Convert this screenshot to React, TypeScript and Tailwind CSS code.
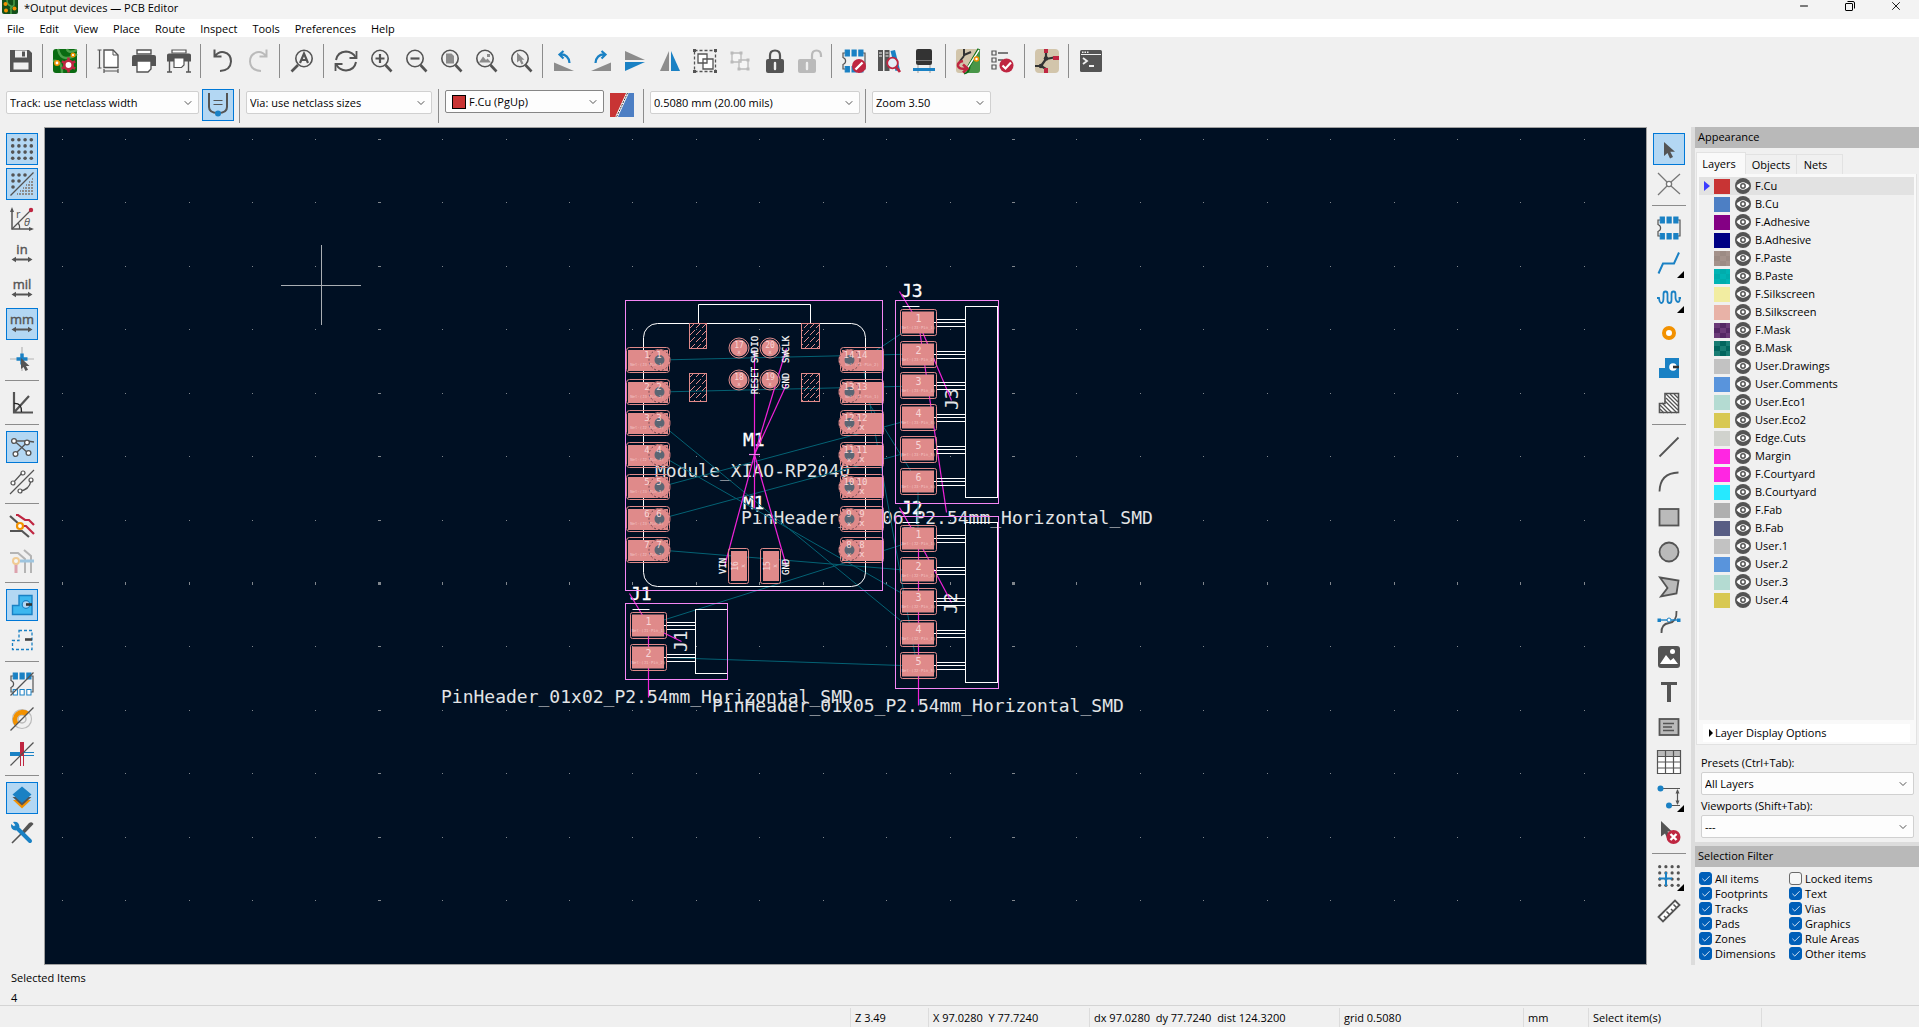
import { useState } from "react";
import type { ReactNode } from "react";
import clsx from "clsx";
import { ChevronDown, Check, Minus, X } from "lucide-react";

const G = "#545454";
const B = "#1a81c4";
const R = "#bf2641";
const O = "#f29100";

/* 24x24 drawings */
const magnifier = (
  <g fill="none" stroke={G}>
    <circle cx="11" cy="9.5" r="8.2" strokeWidth="1.6" />
    <path d="M16.5 16 22.5 22.5" strokeWidth="2.6" />
  </g>
);

const dots = (n: number, step: number, start: number, r: number) =>
  Array.from({ length: n * n }, (_, i) => (
    <circle
      key={i}
      cx={start + (i % n) * step}
      cy={start + Math.floor(i / n) * step}
      r={r}
      fill={G}
    />
  ));

const unitIcon = (label: string) => (
  <>
    <text
      x="12"
      y="12"
      fontSize="13"
      textAnchor="middle"
      fill={G}
      stroke={G}
      strokeWidth="0.4"
      className="font-['Open_Sans',sans-serif]"
    >
      {label}
    </text>
    <path d="M4 17.5H20" stroke={G} strokeWidth="2" />
    <path d="M1.5 17.5 6 14.8V20.2ZM22.5 17.5 18 14.8V20.2Z" fill={G} />
  </>
);

const footprint = (filled: boolean) => (
  <>
    <path
      d="M3 4H1V8.5Q3.6 9.5 3.6 12T1 15.5V20H3M21 4H23V20H21"
      fill="none"
      stroke={G}
      strokeWidth="1.2"
    />
    {[3.2, 10, 16.8].map((x) => (
      <g key={x} fill={B} stroke={B}>
        <rect x={x} y="1" width="4.2" height="6" />
        <rect x={x} y="17.5" width="4.2" height="5.5" fill={filled ? B : "#fff"} />
      </g>
    ))}
  </>
);

const icons: Record<string, ReactNode> = {
  save: (
    <>
      <path d="M1 1H20L23 4V23H1Z" fill={G} />
      <path d="M6 1.5H18V8.5H6ZM4.5 13.5H19.5V20.5H4.5Z" fill="#f0f0f0" />
      <path d="M13 2.5H16V7.5H13Z" fill={G} />
    </>
  ),
  boardSetup: (
    <>
      <rect x="0" y="0" width="24" height="24" rx="3" fill="#0a6b12" />
      <path d="M5 0Q7 9 13 9T24 5M14 0Q15 5 24 1M0 12Q9 10 9 24" stroke="#4ba04a" strokeWidth="2.4" fill="none" />
      <circle cx="4" cy="14" r="2.2" fill="#fff" stroke={O} strokeWidth="1.6" />
      <circle cx="20" cy="6" r="1.8" fill="#fff" stroke={O} strokeWidth="1.4" />
      <g stroke={R} strokeWidth="2.6">
        <path d="M15.5 8.5V23.5M8.8 12.3 22.2 19.7M8.8 19.7 22.2 12.3" />
        <circle cx="15.5" cy="16" r="4.2" fill="#fff" />
      </g>
    </>
  ),
  page: (
    <>
      <path d="M7 1H16L21 6V18.5H7Z" fill="#fff" stroke={G} strokeWidth="1.4" />
      <path d="M16 1V6H21" fill="none" stroke={G} />
      <path d="M2.5 1V19M0.5 1H4.5M0.5 19H4.5M7 22H21M7 20V24M21 20V24" stroke={G} strokeWidth="1.2" />
    </>
  ),
  print: (
    <>
      <path d="M5 1H19V5H5Z" fill="#fff" stroke={G} strokeWidth="1.4" />
      <path d="M2 6H22Q24 6 24 8V17H0V8Q0 6 2 6Z" fill={G} />
      <path d="M5 12H19V20L16 23H5Z" fill="#fff" stroke={G} strokeWidth="1.4" />
    </>
  ),
  plot: (
    <>
      <path d="M5 1H19V4H5Z" fill="#fff" stroke={G} strokeWidth="1.2" />
      <path d="M2 4.5H22Q24 4.5 24 6V12.5H0V6Q0 4.5 2 4.5Z" fill={G} />
      <path d="M7 9H17V16L14.5 18.5H7Z" fill="#fff" stroke={G} strokeWidth="1.2" />
      <path d="M2.5 12V23M21.5 12V23M0 23H5M19 23H24" stroke={G} strokeWidth="1.4" />
    </>
  ),
  undo: (
    <path d="M3.5 0.5V7.5H10.5M3.5 7.5Q8 2 13 3.3Q20 5 20 12.5Q19.5 21.5 9 22" fill="none" stroke={G} strokeWidth="2" />
  ),
  redo: (
    <path d="M20.5 0.5V7.5H13.5M20.5 7.5Q16 2 11 3.3Q4 5 4 12.5Q4.5 21.5 15 22" fill="none" stroke="#bababa" strokeWidth="2" />
  ),
  find: (
    <>
      <circle cx="14" cy="9.5" r="8.2" fill="none" stroke={G} strokeWidth="1.6" />
      <path d="M8 16 1.5 22.5" stroke={G} strokeWidth="2.6" />
      <path d="M10 14 14 4.5 18 14M11.5 11H16.5" fill="none" stroke={G} strokeWidth="2.2" />
    </>
  ),
  refresh: (
    <>
      <path d="M2 11Q3.5 3 12 2.5Q18.5 3 21.5 8M22 13Q20.5 21 12 21.5Q5.5 21 2.5 16" fill="none" stroke={G} strokeWidth="2" />
      <path d="M22.5 2V9H15.5M1.5 22V15H8.5" fill="none" stroke={G} strokeWidth="1.8" />
    </>
  ),
  zoomIn: <>{magnifier}<path d="M11 5V14M6.5 9.5H15.5" stroke={G} strokeWidth="2.2" /></>,
  zoomOut: <>{magnifier}<path d="M6.5 9.5H15.5" stroke={G} strokeWidth="2.2" /></>,
  zoomPage: <>{magnifier}<path d="M7 4.5H12.5L15 7V14.5H7Z" fill="#8c8c8c" /></>,
  zoomObjects: <>{magnifier}<path d="M5 13.5 9 7.5 12 11 13.5 9.5 17 13.5ZM13 5H16V8H13Z" fill="#8c8c8c" /></>,
  zoomSelection: <>{magnifier}<path d="M8 3.5V13.5L10.5 11.5 12.5 15.5 14.5 14.5 12.7 10.8H15.5Z" fill="#8c8c8c" /></>,
  rotateLeft: (
    <>
      <path d="M1 13.5V22H21Z" fill="#8c8c8c" />
      <path d="M10.5 2 6.5 5.5 10.5 9.5M7 5.5Q15.5 5 16.5 14" fill="none" stroke={B} strokeWidth="2.2" />
    </>
  ),
  rotateRight: (
    <>
      <path d="M23 13.5V22H3Z" fill="#8c8c8c" />
      <path d="M13.5 2 17.5 5.5 13.5 9.5M17 5.5Q8.5 5 7.5 14" fill="none" stroke={B} strokeWidth="2.2" />
    </>
  ),
  flipV: <><path d="M2 2V11H22Z" fill="#8c8c8c" /><path d="M2 13V22L22 13Z" fill={B} /></>,
  mirror: <><path d="M11 2V22H2Z" fill="#8c8c8c" /><path d="M13 2V22H22Z" fill={B} /></>,
  group: (
    <>
      <rect x="1.5" y="1.5" width="21" height="21" fill="none" stroke={G} strokeDasharray="3 2" strokeWidth="1.3" />
      <path d="M0 0H3V3H0ZM21 0H24V3H21ZM0 21H3V24H0ZM21 21H24V24H21Z" fill={G} />
      <path d="M5 5H14V14H5ZM10 10H20V20H10Z" fill="#fff" stroke={G} strokeWidth="1.3" />
    </>
  ),
  ungroup: (
    <>
      <path d="M4 4H13V13H4ZM11 11H20V20H11Z" fill="#f5f5f5" stroke="#bababa" strokeWidth="1.3" />
      <path d="M2.5 2.5H5.5V5.5H2.5ZM11.5 2.5H14.5V5.5H11.5ZM2.5 11.5H5.5V14.5H2.5ZM18.5 9.5H21.5V12.5H18.5ZM9.5 18.5H12.5V21.5H9.5ZM18.5 18.5H21.5V21.5H18.5Z" fill="#bababa" />
    </>
  ),
  lock: (
    <>
      <path d="M7 11V6.5Q7 1.5 12 1.5T17 6.5V11" fill="none" stroke={G} strokeWidth="2.2" />
      <rect x="3" y="10" width="18" height="14" rx="2" fill={G} />
      <path d="M12 14V20" stroke="#f0f0f0" strokeWidth="2.4" strokeLinecap="round" />
    </>
  ),
  unlock: (
    <>
      <path d="M14 11V6.5Q14 1.5 18.5 1.5T23 6.5V8" fill="none" stroke="#bababa" strokeWidth="2.2" />
      <rect x="0" y="10" width="18" height="14" rx="2" fill="#bababa" />
      <path d="M9 14V20" stroke="#f0f0f0" strokeWidth="2.4" strokeLinecap="round" />
    </>
  ),
  footprintEditor: (
    <>
      {footprint(true)}
      <circle cx="17" cy="17" r="7" fill={R} />
      <path d="M13.5 20.5 20.5 13.5" stroke="#fff" strokeWidth="2.4" />
    </>
  ),
  library: (
    <>
      <path d="M1 1H6V22H1ZM7.5 1H12.5V22H7.5Z" fill={G} />
      <path d="M2 4H5M2 7H5M8.5 4H11.5M8.5 7H11.5" stroke="#f0f0f0" />
      <path d="M13.5 2 18 1 23 21 18.5 22Z" fill={B} />
      <circle cx="15.5" cy="14" r="5.3" fill="#e4eff7" stroke={R} strokeWidth="1.8" />
      <path d="M19 18 23 23" stroke={R} strokeWidth="2.8" />
    </>
  ),
  viewer3d: (
    <>
      <rect x="4" y="0" width="16" height="16" rx="2" fill="#333" />
      <path d="M4 11.5H20" stroke="#777" />
      <path d="M6 16V24M18 16V24" stroke="#aaa" strokeWidth="1.2" />
      <path d="M1 20.5H23" stroke={B} strokeWidth="3" />
    </>
  ),
  updatePcb: (
    <>
      <rect width="24" height="24" rx="3" fill="#d2c5ab" />
      <path d="M22 0Q24 0 24 3V21Q24 24 21 24H8Z" fill="#489648" />
      <path d="M8 24Q13 23 13 17L23 0" fill="none" stroke="#0a6b12" strokeWidth="3" />
      <path d="M8 0V7M8 6 15 3M8 7 4 12" stroke="#333" strokeWidth="2" />
      <path d="M23 1 9 23" stroke="#fff" strokeWidth="1.4" />
      <circle cx="20.5" cy="10" r="2" fill="#fff" stroke={O} strokeWidth="1.6" />
      <path d="M7 12Q1.5 13 2 17Q3 20.5 10 19.5M7 15.5 11.5 19.5 7 23.5" fill="none" stroke={R} strokeWidth="2.6" />
    </>
  ),
  drc: (
    <>
      <path d="M1 2H5V6H1ZM1 9H5V13H1ZM1 16H5V20H1Z" fill="none" stroke={G} strokeWidth="1.2" />
      <path d="M7 4H17M7 11H12" stroke={G} strokeWidth="1.4" />
      <circle cx="15.5" cy="16.5" r="7" fill={R} />
      <path d="M11.5 16.5 14.5 19.5 20 13.5" fill="none" stroke="#fff" strokeWidth="2.2" />
    </>
  ),
  schematic: (
    <>
      <rect width="24" height="24" rx="4" fill="#d2c5ab" />
      <path d="M11 3V10M11 10 19 8.5M11 10 6 17M6 17H0M6 17 11 20" fill="none" stroke="#333" strokeWidth="2.2" />
      <path d="M9 0H13V4H9ZM18 7H24V11H18ZM9 19H13V24H9Z" fill={R} />
      <circle cx="11" cy="9.5" r="2.3" fill="#333" /><circle cx="6" cy="17" r="2.3" fill="#333" />
    </>
  ),
  terminal: (
    <>
      <rect x="1" y="1" width="22" height="22" rx="1.5" fill={G} />
      <path d="M2 5.5H22" stroke="#f0f0f0" />
      <path d="M3 3.2H10" stroke="#f0f0f0" strokeWidth="1.5" strokeDasharray="1.5 1" />
      <path d="M4 9 8 12 4 15M10 17H15" fill="none" stroke="#f0f0f0" strokeWidth="1.8" />
    </>
  ),
  grid: dots(4, 6.2, 2.7, 1.8),
  gridOverrides: (
    <>
      {[[3, 3], [9, 3], [15, 3], [3, 9], [9, 9], [3, 15]].map(([x, y]) => (
        <circle key={`${x}-${y}`} cx={x} cy={y} r="1.8" fill={G} />
      ))}
      {[22, 19, 16, 13, 10, 7].map((y, i) => (
        <path key={y} d={`M23 ${y}H${7 + i * 3}`} stroke="#8c8c8c" strokeWidth="2" strokeDasharray="2 1" />
      ))}
      <path d="M0.5 23.5 23.5 0.5" stroke={G} strokeWidth="1.2" />
    </>
  ),
  polar: (
    <>
      <path d="M2 2V22H22" fill="none" stroke={G} strokeWidth="1.5" />
      <path d="M0 5 2 0 4 5ZM19 20 24 22 19 24Z" fill={G} />
      <path d="M2 22 20 4M8 16Q10 18 9.5 22" fill="none" stroke={G} strokeWidth="1.2" />
      <circle cx="21" cy="3" r="2.2" fill={R} />
      <text x="6" y="11" fontSize="11" fill={G}>r</text>
      <text x="14" y="19" fontSize="11" fontStyle="italic" fill={G}>θ</text>
    </>
  ),
  inch: unitIcon("in"),
  mil: unitIcon("mil"),
  mm: unitIcon("mm"),
  cursorShape: (
    <>
      <path d="M12 0V24M0 12H24" stroke="#b4b4b4" strokeWidth="1.2" />
      <path d="M12 6.5V17.5M6.5 12H17.5" stroke={B} strokeWidth="3.5" />
      <path d="M11 11V22L13.5 20 15.5 24 18 22.8 16 19H19.5Z" fill={G} />
    </>
  ),
  angle: (
    <>
      <path d="M4 1V21.5H23M4 21.5 19 5" fill="none" stroke={G} strokeWidth="2.2" />
      <path d="M4 12.5Q12 12 11.5 21" fill="none" stroke="#222" strokeWidth="1.3" />
    </>
  ),
  ratsnest: (
    <g fill="#fff" stroke={G} strokeWidth="1.3">
      <path d="M4 6H17L24 7M17 7.5 5 19M5 6.5 18 18" />
      <circle cx="4" cy="6" r="2.4" /><circle cx="17" cy="7.5" r="2.4" />
      <circle cx="5.5" cy="19" r="2.4" /><circle cx="18.5" cy="18" r="2.4" />
    </g>
  ),
  ratsnestCurved: (
    <g fill="none" stroke={G} strokeWidth="1.2">
      <path d="M0 24 24 0M3 13 12 3M10 21Q19 20 21 11" />
      <g fill="#fff"><circle cx="3" cy="13" r="2" /><circle cx="13" cy="3" r="2" /><circle cx="10" cy="21" r="2" /><circle cx="21" cy="10" r="2" /></g>
    </g>
  ),
  highlightNet: (
    <g fill="none" strokeWidth="2.2">
      <path d="M6 1H8L15 6H19L24 11M10 12H16L24 20" stroke={R} />
      <path d="M0 2 10 11M0 17H12L19 23" stroke={G} />
      <circle cx="10" cy="12" r="3" fill="#fff" stroke={O} />
    </g>
  ),
  netInspector: (
    <g fill="none" strokeWidth="2" opacity="0.38">
      <path d="M0 4H8L15 10V24M14 1 21 7V24" stroke={G} />
      <path d="M10 12H24" stroke={B} strokeWidth="3" />
      <path d="M6 14V24" stroke={R} strokeWidth="3" />
      <circle cx="6" cy="12" r="3" fill="#fff" stroke={O} />
    </g>
  ),
  zoneFill: (
    <>
      <path d="M9 2.5H22V21.5H2.5V12.5H9Z" fill="#3db7ef" stroke={B} strokeWidth="1.4" />
      <circle cx="16" cy="11.5" r="3.8" fill="#b4d7f2" stroke={B} strokeWidth="1.2" />
      <path d="M16 11.5H22" stroke="#333" strokeWidth="2.6" />
    </>
  ),
  zoneOutline: (
    <>
      <path d="M9 2.5H22V21.5H2.5V12.5H9Z" fill="none" stroke={B} strokeWidth="1.3" strokeDasharray="3 2" />
      <path d="M15 11.5H22" stroke="#444" strokeWidth="2.6" />
    </>
  ),
  padSketch: <>{footprint(false)}<path d="M0.5 23.5 23.5 0.5" stroke={G} strokeWidth="1.2" /></>,
  viaSketch: (
    <>
      <circle cx="12" cy="12" r="9.5" fill="none" stroke="#bababa" strokeWidth="1.2" />
      <circle cx="12" cy="12" r="4" fill="none" stroke="#bababa" strokeWidth="1.5" />
      <path d="M4.5 18.5A10 10 0 0 1 19 5L15 9A4.5 4.5 0 0 0 8.5 15.5Z" fill={O} />
      <path d="M0.5 23.5 23.5 0.5" stroke={G} strokeWidth="1.2" />
    </>
  ),
  trackSketch: (
    <>
      <path d="M0 12H12" stroke={B} strokeWidth="4" /><path d="M12 10.5H24M12 13.5H24" stroke={B} />
      <path d="M12 0V14" stroke={R} strokeWidth="4" /><path d="M10.5 13V24M13.5 13V24" stroke={R} />
      <path d="M0.5 23.5 23.5 0.5" stroke={G} strokeWidth="1.2" />
    </>
  ),
  layers: (
    <>
      <path d="M3 14 12 22.5 21 14Z" fill={O} /><path d="M2.5 11 12 19.5 21.5 11Z" fill={G} />
      <path d="M12 0.5 21.5 8.5 12 17 2.5 8.5Z" fill={B} />
    </>
  ),
  tools: (
    <>
      <path d="M2 22 13 11" stroke={G} strokeWidth="1.6" />
      <path d="M12 10 19 2Q22 0 23.5 3L14 13Z" fill={G} />
      <path d="M6 6 20 20" stroke={B} strokeWidth="4" strokeLinecap="round" />
      <path d="M3 1Q9 0 9.5 6L6 9.5Q0.5 9 1 3L5 6 6 5Z" fill={B} />
    </>
  ),
  select: <path d="M7 5V19L10.5 16 13 21.5 16 20 13.3 14.8H18Z" fill={G} />,
  localRatsnest: (
    <g fill="none" stroke="#777" strokeWidth="1.3">
      <path d="M1 1 10 10M23 2 14 10M1 23 10 14M23 22 14 14" />
      <circle cx="12" cy="12" r="2.6" fill="#fff" />
    </g>
  ),
  addFootprint: footprint(true),
  route: <path d="M1.5 22.5 6 12.5H17L22 1.5" fill="none" stroke={B} strokeWidth="2" />,
  tune: <path d="M0 12H2Q2.500 17 4.500 17T6.500 11V8Q6.500 5.500 8.500 5.500T10.500 8V14Q10.500 17 12.500 17T14.500 14V8Q14.500 5.500 16.500 5.500T18.500 8V12Q19 16 21 16T22.500 12H24" fill="none" stroke={B} strokeWidth="1.8" />,
  via: <circle cx="12" cy="12" r="5" fill="#fff" stroke={O} strokeWidth="4" />,
  zone: (
    <>
      <path d="M8 2H22V22H2V12H8Z" fill={B} />
      <circle cx="16" cy="11" r="3.8" fill="#fff" />
      <path d="M16 11H22" stroke="#333" strokeWidth="2.6" />
    </>
  ),
  ruleArea: (
    <>
      <path d="M8 2.5H21.5V21.5H2.5V12.5H8Z" fill="#fff" stroke={G} strokeWidth="1.6" />
      <path d="M9 3 21 15M13 3 21 11M17 3 21 7M9 7 21 19M8 10 20 22M5 12 15 22M3 14 11 22M3 18 7 22" stroke={G} strokeWidth="1.3" />
    </>
  ),
  line: <path d="M2.5 21.5 21.5 2.5" stroke={G} strokeWidth="1.8" />,
  arc: <path d="M2.5 21.5Q3 3 21.5 2.5" fill="none" stroke={G} strokeWidth="1.8" />,
  rect: <rect x="2.5" y="4" width="19" height="16.5" fill="#bababa" stroke={G} strokeWidth="1.8" />,
  circle: <circle cx="12" cy="12" r="9.5" fill="#bababa" stroke={G} strokeWidth="1.8" />,
  polygon: <path d="M3 2.5 21.5 5.5 19.5 18.5 4 21.5 10.5 13Z" fill="#bababa" stroke={G} strokeWidth="1.8" />,
  bezier: (
    <>
      <path d="M4.5 23Q4 14 12 13T19.5 1" fill="none" stroke={G} strokeWidth="1.8" />
      <path d="M2 10H22" stroke={B} strokeWidth="1.4" />
      <path d="M0.5 8.5H4V12H0.5ZM20 8.5H23.5V12H20Z" fill={B} />
      <circle cx="12" cy="10" r="2" fill="#fff" stroke={B} />
    </>
  ),
  image: (
    <>
      <rect x="1" y="1" width="22" height="22" rx="3" fill={G} />
      <path d="M3 19 9 10 13.5 15.5 16.5 13 21 19Z" fill="#fff" /><circle cx="15.5" cy="6.5" r="2.5" fill="#fff" />
    </>
  ),
  text: <path d="M4 2H20V5H14V22H10V5H4Z" fill={G} />,
  textBox: (
    <>
      <rect x="2.5" y="4" width="19" height="16" fill="#bababa" stroke={G} strokeWidth="1.8" />
      <path d="M6 8.5H17M6 12H15M6 15.5H17" stroke={G} strokeWidth="1.3" />
    </>
  ),
  table: (
    <>
      <rect x="0.5" y="0.5" width="23" height="23" fill="#fff" /><rect x="0.5" y="0.5" width="23" height="6" fill="#bababa" />
      <path d="M0.5 0.5H23.5V23.5H0.5ZM0.5 6.5H23.5M0.5 12H23.5M0.5 18H23.5M8.5 1V23M16.5 1V23" fill="none" stroke={G} strokeWidth="1.2" />
    </>
  ),
  dimension: (
    <>
      <path d="M4 3.5H23M12 20.5H23M20.5 5V19" stroke={G} strokeWidth="1.2" />
      <path d="M18.5 8.5 20.5 4 22.5 8.5ZM18.5 15.5 20.5 20 22.5 15.5Z" fill={G} />
      <circle cx="3.5" cy="3.5" r="3" fill={B} /><circle cx="12" cy="20.5" r="3" fill={B} />
    </>
  ),
  remove: (
    <>
      <path d="M4 1V16.5L8 13.5 10 18 13 17 10.5 11.5H15Z" fill={G} />
      <circle cx="16.5" cy="17" r="7" fill={R} />
      <path d="M13.5 14 19.5 20M19.5 14 13.5 20" stroke="#fff" strokeWidth="2.4" />
    </>
  ),
  gridOrigin: <>{dots(4, 6.2, 2.7, 1.6)}<path d="M9 8V22M2 14.5H15" stroke={B} strokeWidth="2" /></>,
  measure: (
    <>
      <path d="M1.5 18 18 1.5 22.5 6 6 22.5Z" fill="#fff" stroke={G} strokeWidth="1.8" />
      <path d="M9 19 7 17M12.5 15.5 9.5 12.5M16 12 14 10M19.5 8.5 16.5 5.5" stroke={G} strokeWidth="1.5" />
    </>
  ),
  trackWidth: (
    <>
      <path d="M3 0V14Q3 20 12 20T21 14V0" fill="none" stroke={G} strokeWidth="2" />
      <path d="M7.5 7.5H16.5M7.5 11.5H16.5" stroke={G} strokeWidth="1.2" />
      <circle cx="12" cy="20.5" r="3" fill={B} />
    </>
  ),
};

type Tool = { icon: string; label: string; active?: boolean; disabled?: boolean; more?: boolean };
type Item = Tool | "|";

const t = (icon: string, label: string, extra: Partial<Tool> = {}): Tool => ({ icon, label, ...extra });

const topTools: Item[] = [
  t("save", "Save"), "|", t("boardSetup", "Board Setup"), "|",
  t("page", "Page Settings"), t("print", "Print"), t("plot", "Plot"), "|",
  t("undo", "Undo"), t("redo", "Redo", { disabled: true }), "|", t("find", "Find"), "|",
  t("refresh", "Refresh"), t("zoomIn", "Zoom In"), t("zoomOut", "Zoom Out"),
  t("zoomPage", "Zoom to Fit"), t("zoomObjects", "Zoom to Objects"), t("zoomSelection", "Zoom to Selection"), "|",
  t("rotateLeft", "Rotate Counterclockwise"), t("rotateRight", "Rotate Clockwise"),
  t("flipV", "Mirror Vertically"), t("mirror", "Mirror Horizontally"), t("group", "Group"),
  t("ungroup", "Ungroup", { disabled: true }), t("lock", "Lock"), t("unlock", "Unlock", { disabled: true }), "|",
  t("footprintEditor", "Footprint Editor"), t("library", "Footprint Library Browser"), t("viewer3d", "3D Viewer"), "|",
  t("updatePcb", "Update PCB from Schematic"), t("drc", "Design Rules Checker"), "|",
  t("schematic", "Schematic Editor"), "|", t("terminal", "Scripting Console"),
];

const leftTools: Item[] = [
  t("grid", "Show Grid", { active: true }), t("gridOverrides", "Grid Overrides", { active: true }),
  t("polar", "Polar Coordinates"), t("inch", "Inches"), t("mil", "Mils"), t("mm", "Millimeters", { active: true }),
  t("cursorShape", "Full-Window Crosshairs"), "|", t("angle", "Constrain to 45 Degrees"), "|",
  t("ratsnest", "Show Ratsnest", { active: true }), t("ratsnestCurved", "Curved Ratsnest Lines"), "|",
  t("highlightNet", "Net Highlighting"), t("netInspector", "Dim Inactive Nets"), "|",
  t("zoneFill", "Draw Zone Fills", { active: true }), t("zoneOutline", "Draw Zone Outlines"), "|",
  t("padSketch", "Sketch Pads"), t("viaSketch", "Sketch Vias"), t("trackSketch", "Sketch Tracks"), "|",
  t("layers", "Appearance Manager", { active: true }), t("tools", "Properties Manager"),
];

const rightTools: Item[] = [
  t("select", "Select", { active: true }), t("localRatsnest", "Local Ratsnest"), "|",
  t("addFootprint", "Add Footprint"), t("route", "Route Tracks", { more: true }), t("tune", "Tune Length", { more: true }),
  t("via", "Add Vias"), t("zone", "Add Filled Zone"), t("ruleArea", "Add Rule Area"), "|",
  t("line", "Draw Line"), t("arc", "Draw Arc"), t("rect", "Draw Rectangle"), t("circle", "Draw Circle"),
  t("polygon", "Draw Polygon"), t("bezier", "Draw Bezier Curve"), t("image", "Add Image"), t("text", "Add Text"),
  t("textBox", "Add Text Box"), t("table", "Add Table"), t("dimension", "Add Dimension", { more: true }),
  t("remove", "Delete Items"), "|", t("gridOrigin", "Set Grid Origin", { more: true }), t("measure", "Measure"),
];

const layers: [string, string, string?][] = [
  ["F.Cu", "bg-[#c83434]"],
  ["B.Cu", "bg-[#4d7fc4]"],
  ["F.Adhesive", "bg-[#840084]"],
  ["B.Adhesive", "bg-[#000084]"],
  ["F.Paste", "bg-[#a4928b]", "#9c8b84"],
  ["B.Paste", "bg-[#00b4b4]", "#00acac"],
  ["F.Silkscreen", "bg-[#f2eda1]"],
  ["B.Silkscreen", "bg-[#e8b2a7]"],
  ["F.Mask", "bg-[#6b3a78]", "#552765"],
  ["B.Mask", "bg-[#187c73]", "#02655e"],
  ["User.Drawings", "bg-[#c2c2c2]"],
  ["User.Comments", "bg-[#5994dc]"],
  ["User.Eco1", "bg-[#b4dbd2]"],
  ["User.Eco2", "bg-[#d8c852]"],
  ["Edge.Cuts", "bg-[#d0d2cd]"],
  ["Margin", "bg-[#ff26e2]"],
  ["F.Courtyard", "bg-[#ff26e2]"],
  ["B.Courtyard", "bg-[#26e9ff]"],
  ["F.Fab", "bg-[#afafaf]"],
  ["B.Fab", "bg-[#585d84]"],
  ["User.1", "bg-[#c2c2c2]"],
  ["User.2", "bg-[#5994dc]"],
  ["User.3", "bg-[#b4dbd2]"],
  ["User.4", "bg-[#d8c852]"],
];

const filters = [
  "All items", "Locked items", "Footprints", "Text", "Tracks", "Vias",
  "Pads", "Graphics", "Zones", "Rule Areas", "Dimensions", "Other items",
];

function ToolButton({ tool }: { tool: Tool }) {
  return (
    <button
      type="button"
      aria-label={tool.label}
      disabled={tool.disabled}
      className={clsx(
        "relative flex size-8 shrink-0 items-center justify-center border",
        tool.active ? "border-[#0078d7] bg-[#b3d7f3]" : "border-transparent"
      )}
    >
      <svg viewBox="0 0 24 24" className="size-6 overflow-visible">{icons[tool.icon]}</svg>
      {tool.more && (
        <svg viewBox="0 0 7 7" className="absolute right-0 bottom-0 size-[7px]">
          <path d="M7 0V7H0Z" />
        </svg>
      )}
    </button>
  );
}

function SideBar({ items }: { items: Item[] }) {
  return (
    <div className="flex w-11 shrink-0 flex-col items-center gap-[3px] pt-1.5">
      {items.map((it, i) =>
        it === "|" ? (
          <div key={i} className="mt-[2px] mb-[3px] h-px w-[34px] shrink-0 bg-[#8c8c8c]" />
        ) : (
          <ToolButton key={i} tool={it} />
        )
      )}
    </div>
  );
}

function Dropdown({ label, value, className }: { label: string; value: string; className?: string }) {
  return (
    <div className={clsx("relative flex h-[23px] rounded-[2px] border bg-[#fdfdfd]", className)}>
      {label === "Active layer" && (
        <span className="my-auto ml-1.5 size-3.5 shrink-0 border border-black bg-[#c83434]" />
      )}
      <select aria-label={label} className="min-w-0 flex-1 appearance-none bg-transparent pr-5 pl-[3px] outline-none">
        <option>{value}</option>
      </select>
      <ChevronDown className="pointer-events-none absolute top-[5px] right-1 size-3 text-[#555]" strokeWidth={2} />
    </div>
  );
}

function RowSep({ className }: { className: string }) {
  return <div className={clsx("h-[34px] w-px shrink-0 bg-[#8c8c8c]", className)} />;
}

/* board canvas */
const GRID = 63.42;
const PITCH = 31.72;
const COPPER = "#df8a8a";

type Pt = [number, number];

const ratsnest: [Pt, Pt][] = [
  [[660, 360], [917, 354]],
  [[660, 392], [917, 386]],
  [[660, 423], [917, 634]],
  [[660, 455], [917, 602]],
  [[660, 487], [917, 418]],
  [[660, 519], [917, 450]],
  [[660, 550], [917, 571]],
  [[862, 360], [917, 323]],
  [[862, 360], [917, 666]],
  [[862, 392], [917, 481]],
  [[648, 625], [917, 540]],
  [[648, 657], [917, 666]],
  [[918, 481], [918, 540]],
];

const anchors: [Pt, Pt][] = [
  [[754, 454], [754, 350]],
  [[754, 454], [786, 348]],
  [[754, 454], [786, 384]],
  [[754, 454], [754, 508]],
  [[754, 454], [724, 566]],
  [[754, 454], [786, 566]],
  [[918, 322], [899, 291]],
  [[918, 322], [951, 400]],
  [[918, 322], [946, 512]],
  [[918, 540], [899, 507]],
  [[918, 540], [951, 602]],
  [[918, 540], [918, 705]],
  [[648, 625], [629, 593]],
  [[648, 625], [681, 641]],
  [[648, 625], [648, 697]],
];

function GridDots() {
  const marks: ReactNode[] = [];
  for (let c = -15; c < 10; c++) {
    for (let r = -7; r < 6; r++) {
      const x = Math.round(1013 + c * GRID);
      const y = Math.round(583 + r * GRID);
      const w = c % 10 === 0 ? 3 : 1;
      const h = r % 10 === 0 ? 3 : 1;
      marks.push(<rect key={`${c}:${r}`} x={x - (w - 1) / 2} y={y - (h - 1) / 2} width={w} height={h} />);
    }
  }
  return <g fill="#80868c">{marks}</g>;
}

function PinHeader({ x, y, pins, name }: { x: number; y: number; pins: number; name: string }) {
  const length = Math.round(pins * PITCH);
  return (
    <g>
      <g fill="none" stroke="#fff">
        <rect x={x + 70} y={y + 6} width="32" height={length + 1} />
        <path d={`M${x + 7} ${y + 6}H${x + 24}`} />
      </g>
      {Array.from({ length: pins }, (_, i) => {
        const cy = Math.round(y + 22.5 + i * PITCH) - 0.5;
        return (
          <g key={i}>
            <path d={`M${x + 41} ${cy - 3}H${x + 70}M${x + 38} ${cy}H${x + 70}M${x + 41} ${cy + 4}H${x + 70}`} stroke="#fff" fill="none" />
            <rect x={x + 5} y={cy - 13} width="36" height="26" rx="2" fill="none" stroke={COPPER} />
            <rect x={x + 6.5} y={cy - 11} width="32" height="22" fill={COPPER} />
            <text x={x + 23} y={cy - 1} fontSize="10" textAnchor="middle" fill="#f7d6d6">{i + 1}</text>
            <text x={x + 23} y={cy + 6} fontSize="4" textAnchor="middle" fill="#f2c2c2">{`Net-(${name}-Pin_${i + 1})`}</text>
          </g>
        );
      })}
      <rect x={x} y={y} width={pins === 2 ? 102 : 103} height={length + 13} fill="none" stroke="#f486f4" />
    </g>
  );
}

function ModulePads() {
  return (
    <g>
      {Array.from({ length: 7 }, (_, i) => {
        const cy = Math.round(360 + i * PITCH);
        const n = 14 - i;
        const net = i < 2;
        return (
          <g key={i}>
            <rect x="626.5" y={cy - 12.5} width="43" height="25" rx="3" fill="none" stroke={COPPER} />
            <rect x="628" y={cy - 10} width="40" height="21" fill={COPPER} />
            <circle cx="659.5" cy={cy} r="11" fill={COPPER} />
            <circle cx="659.5" cy={cy} r="10.5" fill="none" stroke="#3b2a35" strokeDasharray="2 2" opacity="0.7" />
            <circle cx="659.5" cy={cy} r="5" fill="#5b6673" />
            <rect x="840.5" y={cy - 12.5} width="43" height="25" rx="3" fill="none" stroke={COPPER} />
            <rect x="842" y={cy - 10} width="40" height="21" fill={COPPER} />
            <circle cx="849.5" cy={cy} r="11" fill={COPPER} />
            <circle cx="849.5" cy={cy} r="10.5" fill="none" stroke="#3b2a35" strokeDasharray="2 2" opacity="0.7" />
            <circle cx="849.5" cy={cy} r="5" fill="#5b6673" />
            <g fill="#f7d6d6" textAnchor="middle" fontSize="9">
              <text x="647" y={cy - 2}>{i + 1}</text>
              <text x="659" y={cy - 2}>{i + 1}</text>
              <text x="849" y={cy - 2}>{n}</text>
              <text x="862" y={cy - 2}>{n}</text>
              {!net && <text x="849" y={cy + 7} fontSize="7">x</text>}
              {!net && <text x="862" y={cy + 7}>x</text>}
            </g>
            <g fill="#f2c2c2" textAnchor="middle" fontSize="4">
              <text x="647" y={cy + 6}>{`Net-(J${i === 0 || i === 1 || i === 4 || i === 5 ? 3 : 2}-Pin_${i + 1})`}</text>
              {net && <text x="862" y={cy + 6}>{`Net-(J1-Pin_${2 - i})`}</text>}
            </g>
          </g>
        );
      })}
      {([[17, 739, 348], [20, 770, 348], [18, 739, 380], [19, 770, 380]] as const).map(([n, x, y]) => (
        <g key={n} textAnchor="middle" fill="#f7d6d6">
          <circle cx={x} cy={y} r="10" fill="none" stroke={COPPER} />
          <circle cx={x} cy={y} r="8.5" fill={COPPER} />
          <text x={x} y={y} fontSize="8">{n}</text>
          <text x={x} y={y + 6} fontSize="6">x</text>
        </g>
      ))}
      {([[16, 728], [15, 760]] as const).map(([n, x]) => (
        <g key={n} textAnchor="middle" fill="#f7d6d6">
          <rect x={x + 0.5} y="548.5" width="20" height="35" rx="2" fill="none" stroke={COPPER} />
          <rect x={x + 3} y="551" width="16" height="30" fill={COPPER} />
          <text transform={`translate(${x + 10} 566) rotate(-90)`} fontSize="8">{n}</text>
          <text transform={`translate(${x + 17} 566) rotate(-90)`} fontSize="6">x</text>
        </g>
      ))}
    </g>
  );
}

function Board() {
  return (
    <svg className="block h-full w-full font-['DejaVu_Sans_Mono',monospace]" role="img" aria-label="PCB layout">
      <defs>
        <pattern id="hatch" width="6" height="7" patternUnits="userSpaceOnUse">
          <path d="M0 6 5 1" stroke={COPPER} fill="none" />
        </pattern>
      </defs>
      <g transform="translate(-45 -128)">
        <GridDots />

        <g fill="#e2e4e6" fontSize="18">
          <text x="655" y="477">Module_XIAO-RP2040</text>
          <text x="741" y="524">PinHeader_01x06_P2.54mm_Horizontal_SMD</text>
          <text x="441" y="703">PinHeader_01x02_P2.54mm_Horizontal_SMD</text>
          <text x="712" y="712">PinHeader_01x05_P2.54mm_Horizontal_SMD</text>
          <text transform="translate(958 410) rotate(-90)">J3</text>
          <text transform="translate(957 614) rotate(-90)">J2</text>
          <text transform="translate(687 652) rotate(-90)">J1</text>
        </g>
        <g fill="#fff" stroke="#fff" strokeWidth="0.3" fontSize="18">
          <text x="743" y="446">M1</text>
          <text x="743" y="509">M1</text>
          <text x="630" y="600">J1</text>
          <text x="901" y="514">J2</text>
          <text x="901" y="297">J3</text>
        </g>

        <g stroke="#046274">
          {ratsnest.map(([a, b], i) => (
            <path key={i} d={`M${a[0]} ${a[1]}L${b[0]} ${b[1]}`} />
          ))}
        </g>

        {/* XIAO module */}
        <g fill="none" stroke="#fff">
          <path d="M698.5 323V304.5H810.5V323" />
          <rect x="643.5" y="323.5" width="222" height="263" rx="14" />
        </g>
        <g fill="url(#hatch)" stroke={COPPER}>
          <rect x="689.5" y="323.5" width="17" height="25" />
          <rect x="801.5" y="323.5" width="18" height="25" />
          <rect x="689.5" y="373.5" width="17" height="28" />
          <rect x="801.5" y="373.5" width="18" height="28" />
        </g>
        <g stroke="#f022d8" strokeWidth="1.2">
          {anchors.map(([a, b], i) => (
            <path key={i} d={`M${a[0] + 0.5} ${a[1] + 0.5}L${b[0] + 0.5} ${b[1] + 0.5}`} />
          ))}
          <path d="M749 454.5H760" stroke="#f486f4" />
        </g>
        <ModulePads />
        <rect x="625.5" y="300.5" width="257" height="290" fill="none" stroke="#f486f4" />
        <g fill="#fff" fontSize="9" stroke="#fff" strokeWidth="0.2">
          <text transform="translate(758 363) rotate(-90)">SWDIO</text>
          <text transform="translate(758 394) rotate(-90)">RESET</text>
          <text transform="translate(789 363) rotate(-90)">SWCLK</text>
          <text transform="translate(789 389) rotate(-90)">GND</text>
          <text transform="translate(726 574) rotate(-90)">VIN</text>
          <text transform="translate(789 575) rotate(-90)">GND</text>
        </g>

        <PinHeader x={895.5} y={300.5} pins={6} name="J3" />
        <PinHeader x={895.5} y={516.5} pins={5} name="J2" />
        <PinHeader x={625.5} y={603.5} pins={2} name="J1" />

        <path d="M281 285.5H361M321.5 245V325" stroke="#a9aeb3" />
      </g>
    </svg>
  );
}

function AppearancePanel() {
  const [current, setCurrent] = useState("F.Cu");

  return (
    <aside className="flex w-[228px] shrink-0 flex-col border-l-4 border-[#dcdcdc]">
      <h2 className="h-[21px] shrink-0 bg-[#b9b9b9] pl-[3px] leading-5">Appearance</h2>

      <div className="mt-1 flex items-end pl-px" role="tablist">
        <button type="button" role="tab" aria-selected className="h-[22px] w-[50px] border border-b-0 border-[#e2e2e2] bg-[#f9f9f9] pr-1">Layers</button>
        <button type="button" role="tab" className="h-5 w-[51px] border border-b-0 border-l-0 border-[#e2e2e2]">Objects</button>
        <button type="button" role="tab" className="h-5 w-[46px] border border-b-0 border-l-0 border-[#e2e2e2] pr-2">Nets</button>
      </div>

      <div className="mr-[2px] ml-px flex min-h-0 flex-1 flex-col border border-t-0 border-[#e2e2e2] bg-[#f9f9f9] px-[2px] pt-[3px] pb-[2px]">
        <ul className="min-h-0 flex-1 overflow-hidden bg-[#f0f0f0]">
          {layers.map(([name, color, check]) => (
            <li
              key={name}
              onClick={() => setCurrent(name)}
              className={clsx("flex h-[18px] items-center", name === current && "bg-[#e2e2e2]")}
            >
              <span className="flex w-[15px] justify-center">
                {name === current && (
                  <svg viewBox="0 0 6 10" className="h-2.5 w-1.5"><path d="M0 0 6 5 0 10Z" fill="#3b3bff" /></svg>
                )}
              </span>
              <button type="button" aria-label={`${name} color`} className={clsx("h-[15px] w-4", color)}>
                {check && (
                  <svg viewBox="0 0 16 15" className="block h-full w-full">
                    <path d="M6 0H12V5H6ZM0 5H6V10H0ZM12 5H16V10H12ZM6 10H12V15H6Z" fill={check} />
                  </svg>
                )}
              </button>
              <button type="button" aria-label={`Toggle ${name}`} className="ml-[5px] size-4">
                <svg viewBox="0 0 16 16" className="block size-4">
                  <circle cx="8" cy="8" r="8" fill={G} />
                  <path d="M1.5 8Q8 0.5 14.5 8Q8 15.5 1.5 8Z" fill="#fff" />
                  <circle cx="8" cy="8" r="2.2" fill="#fff" stroke={G} strokeWidth="1.5" />
                </svg>
              </button>
              <span className="ml-1">{name}</span>
            </li>
          ))}
        </ul>
        <button type="button" className="mx-1 mt-1 flex h-[18px] shrink-0 items-center bg-white pl-1.5">
          <svg viewBox="0 0 4 8" className="mr-[2px] h-2 w-1"><path d="M0 0 4 4 0 8Z" /></svg>
          Layer Display Options
        </button>
      </div>

      <div className="flex flex-col pt-[9px] pr-[5px] pb-1 pl-1.5">
        <span className="leading-[18px]">Presets (Ctrl+Tab):</span>
        <Dropdown label="Presets" value="All Layers" className="border-[#d0d0d0]" />
        <span className="mt-[2px] leading-[18px]">Viewports (Shift+Tab):</span>
        <Dropdown label="Viewports" value="---" className="border-[#d0d0d0]" />
      </div>

      <div className="h-1 shrink-0 bg-[#dcdcdc]" />
      <h2 className="h-[21px] shrink-0 bg-[#b9b9b9] pl-[3px] leading-5">Selection Filter</h2>
      <div className="grid shrink-0 grid-cols-[90px_1fr] pt-1 pb-1 pl-1">
        {filters.map((name) => (
          <label key={name} className="flex h-[15px] items-center gap-[3px]">
            <span className="grid size-[13px]">
              <input
                type="checkbox"
                defaultChecked={name !== "Locked items"}
                className="peer size-[13px] appearance-none rounded-[3px] border border-[#6a6a6a] bg-[#f6f6f6] [grid-area:1/1] checked:border-[#005fb8] checked:bg-[#005fb8]"
              />
              <Check className="pointer-events-none invisible m-auto size-2.5 text-white [grid-area:1/1] peer-checked:visible" strokeWidth={2} />
            </span>
            {name}
          </label>
        ))}
      </div>
    </aside>
  );
}

export default function App() {
  return (
    <div className="flex h-screen flex-col overflow-hidden bg-[#f0f0f0] font-['Open_Sans','Noto_Sans',sans-serif] text-[11px] leading-4 text-black">

      {/* Title bar */}
      <header className="flex h-[19px] shrink-0 items-start bg-[#f3f3f3]">
        <svg viewBox="0 0 16 14" className="ml-[2px] h-3.5 w-4">
          <path d="M0 0H16V12Q16 14 14 14H2Q0 14 0 12Z" fill="#14501a" />
          <path d="M5 0Q5 5 9 6V14M12 0V5L8 9" fill="none" stroke="#4ba04a" strokeWidth="1.5" />
          <circle cx="3.5" cy="4" r="2" fill={O} /><circle cx="4" cy="10.5" r="2" fill={O} /><circle cx="12.5" cy="8.5" r="2" fill={O} />
        </svg>
        <h1 className="ml-1.5 leading-[15px]">*Output devices — PCB Editor</h1>
        <div className="ml-auto flex">
          <button type="button" aria-label="Minimize" className="flex h-3 w-[46px] items-center justify-center"><Minus className="size-3" strokeWidth={2} /></button>
          <button type="button" aria-label="Restore" className="flex h-3 w-[46px] items-center justify-center">
            <svg viewBox="0 0 10 10" className="size-2.5" fill="none" stroke="#000">
              <path d="M0.5 3Q0.5 2.5 1 2.5H7Q7.5 2.5 7.5 3V9Q7.5 9.5 7 9.5H1Q0.5 9.5 0.5 9ZM2.5 0.5H8Q9.5 0.5 9.5 2V7.5" />
            </svg>
          </button>
          <button type="button" aria-label="Close" className="flex h-3 w-[46px] items-center justify-center"><X className="size-3.5" strokeWidth={1.5} /></button>
        </div>
      </header>

      {/* Menu */}
      <nav className="flex h-[18px] shrink-0 items-center gap-[15px] bg-white pt-px pl-[7px]">
        {["File", "Edit", "View", "Place", "Route", "Inspect", "Tools", "Preferences", "Help"].map((m) => (
          <button key={m} type="button">{m}</button>
        ))}
      </nav>

      {/* Toolbars */}
      <div className="flex h-12 shrink-0 items-center gap-[3px] pl-[5px]">
        {topTools.map((it, i) =>
          it === "|" ? <RowSep key={i} className="mr-[3px] ml-[2px]" /> : <ToolButton key={i} tool={it} />
        )}
      </div>

      <div className="flex h-[42px] shrink-0 items-start pt-1 pl-1.5">
        <Dropdown label="Track width" value="Track: use netclass width" className="mt-[2px] w-[193px] border-[#d0d0d0]" />
        <span className="ml-[3px]"><ToolButton tool={t("trackWidth", "Use existing track width", { active: true })} /></span>
        <RowSep className="mr-1.5 ml-[5px]" />
        <Dropdown label="Via size" value="Via: use netclass sizes" className="mt-[2px] w-[186px] border-[#d0d0d0]" />
        <RowSep className="mx-1.5" />
        <Dropdown label="Active layer" value="F.Cu (PgUp)" className="mt-px w-[159px] border-[#868686]" />
        <button type="button" aria-label="Layer pair" className="mt-1 ml-1.5 size-6">
          <svg viewBox="0 0 24 24" className="size-6">
            <path d="M0 0H17L6 24H0Z" fill="#c83434" />
            <path d="M18 0H24V24H7Z" fill="#4d7fc4" />
            <path d="M17.5 0 6.5 24" stroke="#fff" strokeWidth="2.5" />
            <path d="M17.5 0 6.5 24" stroke="#333" strokeWidth="1" strokeDasharray="2 1" />
          </svg>
        </button>
        <RowSep className="mr-1.5 ml-[9px]" />
        <Dropdown label="Grid" value="0.5080 mm (20.00 mils)" className="mt-[2px] w-[210px] border-[#d0d0d0]" />
        <RowSep className="mr-1.5 ml-[5px]" />
        <Dropdown label="Zoom" value="Zoom 3.50" className="mt-[2px] w-[119px] border-[#d0d0d0]" />
      </div>

      <main className="flex min-h-0 flex-1">
        <SideBar items={leftTools} />
        <div className="min-w-0 flex-1 overflow-hidden border border-[#a0a0a0] bg-[#001023]">
          <Board />
        </div>
        <SideBar items={rightTools} />
        <AppearancePanel />
      </main>

      {/* Message panel */}
      <section className="flex h-10 shrink-0 flex-col gap-1 pt-[5px] pl-[11px]">
        <span>Selected Items</span>
        <span>4</span>
      </section>

      {/* Status bar */}
      <footer className="flex h-[22px] shrink-0 items-center border-t border-[#d4d4d4] pt-[2px] whitespace-pre *:border-l *:border-[#dcdcdc] *:pl-1 *:leading-5">
        <span className="flex-1 border-l-0!"> </span>
        <span className="w-[78px]">Z 3.49</span>
        <span className="w-[161px]">X 97.0280  Y 77.7240</span>
        <span className="w-[250px]">dx 97.0280  dy 77.7240  dist 124.3200</span>
        <span className="w-[184px]">grid 0.5080</span>
        <span className="w-[65px]">mm</span>
        <span className="w-[173px]">Select item(s)</span>
        <span className="w-[158px]"> </span>
      </footer>
    </div>
  );
}
